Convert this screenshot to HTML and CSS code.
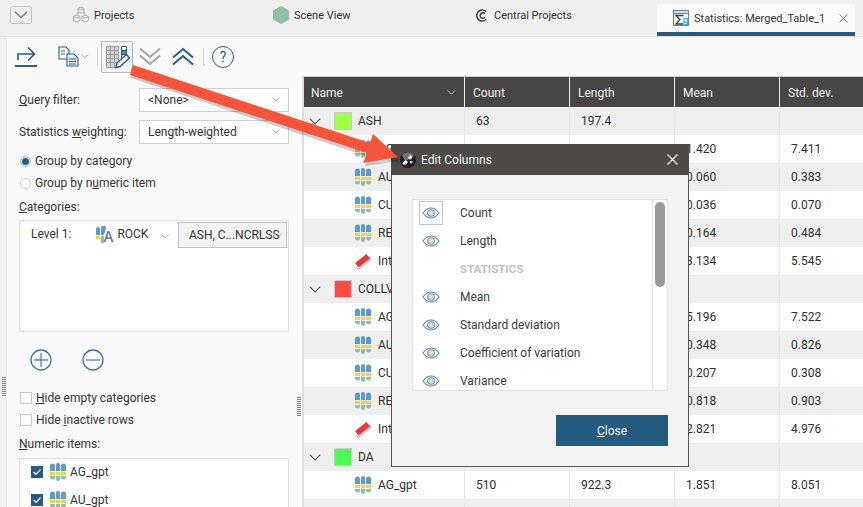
FILE: index.html
```html
<!DOCTYPE html>
<html lang="en">
<head>
<meta charset="utf-8">
<title>Statistics: Merged_Table_1</title>
<link rel="stylesheet" href="styles.css">
</head>
<body>
<svg class="defs" width="0" height="0">
  <symbol id="num" viewBox="0 0 18 18">
    <path fill="#5b9ac9" d="M1 8V3a2.500 2.500 0 0 1 5 0v5zM7 8V2a2 2 0 0 1 4 0v6zM12 8V3a2.500 2.500 0 0 1 5 0v5z"/>
    <path fill="#f6cf45" d="M1 9h5v3H1zM7 9h4v3H7zM12 9h5v3h-5z"/>
    <path fill="#8dbfa5" d="M1 13h5v1a2.500 2.500 0 0 1-5 0zM7 13h4v3a2 2 0 0 1-4 0zM12 13h5v1a2.500 2.500 0 0 1-5 0z"/>
  </symbol>
  <symbol id="interval" viewBox="0 0 18 18">
    <path fill="none" stroke="#b5b5b5" stroke-width="1.100" d="M2 15l2.500 2.500 12.500-10.500-2-2.500"/>
    <path fill="#e5383b" d="M1 11L12.500 2l3.500 4.500L4.500 15.500z"/>
  </symbol>
  <symbol id="eye" viewBox="0 0 18 12">
    <path fill="none" stroke="#5f86a3" stroke-width="1.100" d="M1 6c2.500-3.400 5-5 8-5s5.500 1.600 8 5c-2.500 3.400-5 5-8 5S3.500 9.400 1 6z"/>
    <circle cx="9" cy="6" r="3.300" fill="none" stroke="#5f86a3" stroke-width="1.100"/>
    <circle cx="9" cy="6" r="1.500" fill="none" stroke="#9db5c6" stroke-width="0.800"/>
  </symbol>
  <symbol id="chev" viewBox="0 0 10 6">
    <path fill="none" stroke="currentColor" stroke-width="1" d="M.5.500L5 5 9.500.500"/>
  </symbol>
</svg>

<div class="app">
  <header class="tabbar">
    <button class="collapse"><svg class="collapse-icon"><use href="#chev"/></svg></button>
    <div class="tab tab-projects">
      <svg class="tab-icon" viewBox="0 0 18 18"><path fill="none" stroke="#a9a9a9" stroke-width="1" d="M9 1l3 1.500v3L9 7 6 5.500v-3zM5 9l3 1.500v4L5 16l-3.500-1.500v-4zM13 9l3.500 1.500v4L13 16l-3-1.500v-4zM6 2.500l3 1.500 3-1.500M1.500 10.500L5 12l3-1.500M10 10.500l3 1.500 3.500-1.500M6 5.500L4.500 9M12 5.500L13.500 9"/></svg>
      <span>Projects</span>
    </div>
    <div class="tab tab-scene">
      <svg class="tab-icon" viewBox="0 0 18 18"><path fill="#8dbfa5" d="M9 0l8 4.500v9L9 18l-8-4.500v-9z"/><path fill="none" stroke="#a5ceb8" stroke-width=".7" d="M1 4.500L9 9l8-4.500M9 9v9"/></svg>
      <span>Scene View</span>
    </div>
    <div class="tab tab-central">
      <svg class="central-icon" viewBox="0 0 14 14"><path fill="none" stroke="#333" stroke-width="1.500" d="M12 2.600A6 6 0 1 0 12 11.400"/><path fill="none" stroke="#333" stroke-width="1.500" d="M10.800 5A3 3 0 1 0 10.800 9"/></svg>
      <span>Central Projects</span>
    </div>
    <div class="tab tab-active">
      <svg class="stat-icon" viewBox="0 0 16 16"><path fill="#f2f6f8" stroke="#5f86a3" d="M.5.500h15v15H.5z"/><path fill="#cfe0ea" stroke="#5f86a3" d="M.5.500h15v3H.5z"/><path fill="none" stroke="#3d3d3d" stroke-width="1.300" d="M10.500 5.500H3l4 4-4 4.500h7.500"/><path fill="none" stroke="#4fa6d3" stroke-width="1.200" d="M11 8.500h3.500v4H11zM14.500 8.500v6H11"/></svg>
      <span class="tab-title">Statistics: Merged_Table_1</span>
      <svg class="tab-close" viewBox="0 0 9 9"><path fill="none" stroke="#7a7a7a" d="M.5.500l8 8M8.500.500l-8 8"/></svg>
    </div>
  </header>

  <div class="workspace">
    <div class="strip"></div>
    <aside class="panel">
      <div class="toolbar">
        <svg class="tool tool-export" viewBox="0 0 22 21"><path fill="none" stroke="#2a5f84" stroke-width="1.700" d="M3 14V8h16M13 1.500L19.500 8 13 14.500"/><path stroke="#2a5f84" stroke-width="2" d="M0 20h22"/></svg>
        <svg class="tool tool-copy" viewBox="0 0 21 21"><path fill="#fff" stroke="#2a5f84" stroke-width="1.100" d="M1 1h7l3 3v9H1z"/><path fill="#eaf1f6" stroke="#2a5f84" stroke-width="1.100" d="M9 8h7l4 4v8H9z"/><path fill="none" stroke="#2a5f84" d="M11 13h7M11 15.500h7M11 18h7M3 5h4M3 8h4"/></svg>
        <svg class="tool-chev"><use href="#chev"/></svg>
        <span class="sep sep-a"></span>
        <span class="tool-pressed">
          <svg class="tool-grid" viewBox="0 0 26 24">
            <path fill="#d4d4d4" stroke="#9a9a9a" d="M2.500 1.500h12v21h-12z"/>
            <path fill="none" stroke="#9a9a9a" d="M6.500 1.500v21M10.500 1.500v21M2.500 5.500h12M2.500 9.500h12M2.500 13.500h12M2.500 17.500h12"/>
            <path fill="#fff" stroke="#2a5f84" d="M17.500 1.500h5v13h-5z"/>
            <path fill="#5a87a6" d="M18 6h4v3h-4z"/>
            <path stroke="#2a5f84" d="M17.500 5.500h5M17.500 9.500h5"/>
            <path fill="#fafafa" stroke="#2a5f84" stroke-width="1.400" d="M12 22.500l1-4.500 9.500-8.500 3 3.500-9.500 8.500z"/>
          </svg>
        </span>
        <svg class="tool tool-dbl" viewBox="0 0 22 19"><path fill="none" stroke="#a3a3a3" stroke-width="2" d="M1 1.500l10 8.500 10-8.500M1 8.500L11 17l10-8.500"/></svg>
        <svg class="tool tool-dbl" viewBox="0 0 22 19"><path fill="none" stroke="#2a5f84" stroke-width="2" d="M1 10.500L11 2l10 8.500M1 17.500L11 9l10 8.500"/></svg>
        <span class="sep sep-b"></span>
        <span class="help">?</span>
      </div>

      <div class="form-row">
        <label class="form-label"><u>Q</u>uery filter:</label>
        <div class="select"><span>&lt;None&gt;</span><svg class="select-chev"><use href="#chev"/></svg></div>
      </div>
      <div class="form-row row-second">
        <label class="form-label">Statistics <u>w</u>eighting:</label>
        <div class="select"><span>Length-weighted</span><svg class="select-chev"><use href="#chev"/></svg></div>
      </div>

      <div class="radio-row radio-first"><span class="radio radio-on"></span><span>Group by cate<u>g</u>ory</span></div>
      <div class="radio-row"><span class="radio"></span><span>Group by n<u>u</u>meric item</span></div>

      <div class="caption caption-cat"><u>C</u>ategories:</div>
      <div class="cat-box">
        <span class="level">Level 1:</span>
        <svg class="rock-icon" viewBox="0 0 18 18">
          <path fill="#5b9ac9" d="M0 9V3a2 2 0 0 1 4 0v6zM5 9V2a2.500 2.500 0 0 1 5 0L8 9z"/>
          <path fill="#f6cf45" d="M0 10h4v3H0z"/>
          <path fill="#8dbfa5" d="M5 10h3v6a1.500 1.500 0 0 1-3 0z"/>
          <path fill="#7d7d7d" d="M11.500 5h2l4 11h-2l-1-3h-4l-1 3h-2zM11.300 11.300h2.700l-1.300-4z"/>
        </svg>
        <span class="rock">ROCK</span>
        <svg class="rock-chev"><use href="#chev"/></svg>
        <div class="cat-select"><span>ASH, C...NCRLSS</span><svg class="cat-chev"><use href="#chev"/></svg></div>
      </div>

      <div class="addrem">
        <svg class="round" viewBox="0 0 22 22"><circle cx="11" cy="11" r="10" fill="none" stroke="#3f7196" stroke-width="1.300"/><path stroke="#5f86a3" stroke-width="1.300" d="M4 11h14M11 4v14"/></svg>
        <svg class="round" viewBox="0 0 22 22"><circle cx="11" cy="11" r="10" fill="none" stroke="#3f7196" stroke-width="1.300"/><path stroke="#5f86a3" stroke-width="1.300" d="M4 11h14"/></svg>
      </div>

      <div class="check-row check-first"><span class="check"></span><span><u>H</u>ide empty categories</span></div>
      <div class="check-row"><span class="check"></span><span>Hide <u>i</u>nactive rows</span></div>

      <div class="caption caption-num"><u>N</u>umeric items:</div>
      <div class="num-box">
        <div class="num-row"><span class="check check-on"><svg class="tick" viewBox="0 0 8 6"><path fill="none" stroke="#fff" stroke-width="1.200" d="M.5 3l2.500 2.300L7.500.500"/></svg></span><svg class="num-icon"><use href="#num"/></svg><span>AG_gpt</span></div>
        <div class="num-row"><span class="check check-on"><svg class="tick" viewBox="0 0 8 6"><path fill="none" stroke="#fff" stroke-width="1.200" d="M.5 3l2.500 2.300L7.500.500"/></svg></span><svg class="num-icon"><use href="#num"/></svg><span>AU_gpt</span></div>
      </div>
      <span class="grip grip-right"></span>
    </aside>

    <main class="main">
      <table class="stats">
        <colgroup><col class="c-name"><col class="c-n"><col class="c-n"><col class="c-n"><col class="c-last"></colgroup>
        <thead>
          <tr><th><span class="th-name">Name<svg class="th-chev"><use href="#chev"/></svg></span></th><th>Count</th><th>Length</th><th>Mean</th><th>Std. dev.</th></tr>
        </thead>
        <tbody>
          <tr class="group"><td><span class="g-name"><svg class="g-chev"><use href="#chev"/></svg><span class="swatch swatch-ash"></span>ASH</span></td><td>63</td><td>197.4</td><td></td><td></td></tr>
          <tr><td><span class="c-item"><svg class="item-icon"><use href="#num"/></svg>AG_gpt</span></td><td></td><td></td><td>1.420</td><td>7.411</td></tr>
          <tr class="alt"><td><span class="c-item"><svg class="item-icon"><use href="#num"/></svg>AU_gpt</span></td><td></td><td></td><td>0.060</td><td>0.383</td></tr>
          <tr><td><span class="c-item"><svg class="item-icon"><use href="#num"/></svg>CU_gpt</span></td><td></td><td></td><td>0.036</td><td>0.070</td></tr>
          <tr class="alt"><td><span class="c-item"><svg class="item-icon"><use href="#num"/></svg>RE_gpt</span></td><td></td><td></td><td>0.164</td><td>0.484</td></tr>
          <tr><td><span class="c-item"><svg class="item-icon"><use href="#interval"/></svg>Interval</span></td><td></td><td></td><td>3.134</td><td>5.545</td></tr>
          <tr class="group"><td><span class="g-name"><svg class="g-chev"><use href="#chev"/></svg><span class="swatch swatch-coll"></span>COLLV</span></td><td></td><td></td><td></td><td></td></tr>
          <tr><td><span class="c-item"><svg class="item-icon"><use href="#num"/></svg>AG_gpt</span></td><td></td><td></td><td>5.196</td><td>7.522</td></tr>
          <tr class="alt"><td><span class="c-item"><svg class="item-icon"><use href="#num"/></svg>AU_gpt</span></td><td></td><td></td><td>0.348</td><td>0.826</td></tr>
          <tr><td><span class="c-item"><svg class="item-icon"><use href="#num"/></svg>CU_gpt</span></td><td></td><td></td><td>0.207</td><td>0.308</td></tr>
          <tr class="alt"><td><span class="c-item"><svg class="item-icon"><use href="#num"/></svg>RE_gpt</span></td><td></td><td></td><td>0.818</td><td>0.903</td></tr>
          <tr><td><span class="c-item"><svg class="item-icon"><use href="#interval"/></svg>Interval</span></td><td></td><td></td><td>2.821</td><td>4.976</td></tr>
          <tr class="group"><td><span class="g-name"><svg class="g-chev"><use href="#chev"/></svg><span class="swatch swatch-da"></span>DA</span></td><td></td><td></td><td></td><td></td></tr>
          <tr><td><span class="c-item"><svg class="item-icon"><use href="#num"/></svg>AG_gpt</span></td><td>510</td><td>922.3</td><td>1.851</td><td>8.051</td></tr>
          <tr class="alt"><td></td><td></td><td></td><td></td><td></td></tr>
        </tbody>
      </table>
    </main>
  </div>
</div>
<span class="grip grip-left"></span>

<section class="dialog">
  <div class="dlg-title">
    <svg class="dlg-logo" viewBox="0 0 16 16"><circle cx="8" cy="8" r="8" fill="#1f1f1f"/><path fill="#9a9a9a" d="M2 3a8 8 0 0 1 12 0l-3 4-6 2z" opacity=".7"/><path fill="#fff" d="M2.500 11l3-3 2.500 2-2 2.500H3zM8 6l2-3 2.500 1.500-1.500 3zM9.500 9l3.500.5-2 2.500z"/></svg>
    <span class="dlg-name">Edit Columns</span>
    <svg class="dlg-close" viewBox="0 0 11 11"><path fill="none" stroke="#fff" stroke-width="1.100" d="M.5.500l10 10M10.500.500l-10 10"/></svg>
  </div>
  <div class="dlg-body">
    <div class="list">
      <div class="list-items">
        <div class="li"><span class="eye-wrap eye-focus"><svg class="eye"><use href="#eye"/></svg></span><span>Count</span></div>
        <div class="li"><span class="eye-wrap"><svg class="eye"><use href="#eye"/></svg></span><span>Length</span></div>
        <div class="li li-head"><span class="eye-wrap"></span><span>STATISTICS</span></div>
        <div class="li"><span class="eye-wrap"><svg class="eye"><use href="#eye"/></svg></span><span>Mean</span></div>
        <div class="li"><span class="eye-wrap"><svg class="eye"><use href="#eye"/></svg></span><span>Standard deviation</span></div>
        <div class="li"><span class="eye-wrap"><svg class="eye"><use href="#eye"/></svg></span><span>Coefficient of variation</span></div>
        <div class="li"><span class="eye-wrap"><svg class="eye"><use href="#eye"/></svg></span><span>Variance</span></div>
      </div>
      <div class="scroll"><span class="thumb"></span></div>
    </div>
    <div class="dlg-foot"><button class="close-btn"><u>C</u>lose</button></div>
  </div>
</section>

<svg class="arrow" viewBox="0 0 863 507">
  <path fill="#000" opacity=".2" d="M131 68L131 78 369 157 365 166 399 161 375 138 372 146z"/>
  <path fill="#f5553a" d="M133 65L130 75 367 153 363 163 398 157 373 134 370 143z"/>
</svg>
</body>
</html>
```

FILE: styles.css
```css
* { box-sizing: border-box; }
html, body { margin: 0; padding: 0; width: 863px; height: 507px; overflow: hidden; }
body { font-family: Roboto, "Liberation Sans", sans-serif; font-size: 12px; color: #333; background: #f0f0f0; position: relative; }
svg { display: block; flex: none; }
u { text-underline-offset: 1px; }
.defs { position: absolute; }
.app { display: flex; flex-direction: column; height: 507px; }

/* tabs */
.tabbar { display: flex; align-items: flex-start; height: 37px; flex: none; background: #f0f0f0; border-bottom: 1px solid #e2e2e2; position: relative; }
.collapse { width: 22px; height: 18px; margin: 6px 0 0 10px; padding: 0; background: #f0f0f0; border: 1px solid #c6c6c6; border-radius: 2px; display: flex; align-items: center; justify-content: center; color: #777; }
.collapse-icon { width: 14px; height: 8px; }
.tab { display: flex; align-items: center; height: 30px; font-size: 11px; }
.tab-icon { width: 18px; height: 18px; margin-right: 4px; }
.tab-projects { margin-left: 40px; width: 62px; }
.tab-scene { margin-left: 138px; width: 120px; }
.tab-central { margin-left: 83px; width: 182px; }
.central-icon { width: 13px; height: 13px; margin-right: 6px; }
.tab-active { width: 198px; height: 32px; margin-top: 4px; background: #fbfbfb; border-bottom: 4px solid #265a7e; padding: 0 0 0 16px; }
.stat-icon { width: 16px; height: 16px; margin-right: 5px; }
.tab-title { width: 145px; white-space: nowrap; }
.tab-close { width: 9px; height: 9px; }

/* workspace */
.workspace { display: flex; flex: 1; min-height: 0; }
.strip { width: 7px; flex: none; background: #f0f0f0; border-right: 1px solid #e8e8e8; }
.panel { width: 295px; flex: none; background: #fafafa; position: relative; padding: 0 0 0 12px; overflow: hidden; }
.toolbar { display: flex; align-items: center; height: 39px; position: relative; }
.tool-export { width: 22px; height: 21px; margin-left: -4px; }
.tool-copy { width: 21px; height: 21px; margin-left: 21px; }
.tool-chev { width: 8px; height: 5px; margin-left: 2px; color: #a0a0a0; }
.sep { width: 1px; height: 18px; background: #d8d8d8; }
.sep-a { margin-left: 8px; }
.tool-pressed { width: 32px; height: 32px; margin-left: 3px; background: #f3f3f3; border: 1px solid #b9b9b9; border-radius: 2px; display: flex; align-items: center; justify-content: center; }
.tool-grid { width: 26px; height: 24px; }
.tool-dbl { width: 22px; height: 19px; }
.tool-pressed + .tool-dbl { margin-left: 6px; }
.tool-dbl + .tool-dbl { margin-left: 11px; }
.sep-b { margin-left: 9px; }
.help { width: 22px; height: 22px; margin-left: 8px; border: 1.500px solid #2a5f84; border-radius: 50%; color: #2a5f84; font-size: 14px; display: flex; align-items: center; justify-content: center; }

.form-row { display: flex; align-items: center; height: 24px; margin-top: 12px; }
.row-second { margin-top: 8px; }
.form-label { width: 120px; flex: none; }
.select { width: 150px; height: 24px; border: 1px solid #d0d0d0; background: #fff; display: flex; align-items: center; justify-content: space-between; padding: 0 8px 0 8px; margin-top: -1px; }
.select-chev { width: 8px; height: 5px; color: #9a9a9a; }
.radio-row { display: flex; align-items: center; gap: 4px; height: 16px; margin-top: 6px; padding-left: 1px; }
.radio-first { margin-top: 9px; }
.radio { width: 11px; height: 11px; border-radius: 50%; border: 1px solid #cfcfcf; background: #fff; position: relative; flex: none; }
.radio-on { border-color: #bcd0dd; background: #265a7e; box-shadow: inset 0 0 0 1px #fff; }
.caption-cat { margin-top: 8px; height: 16px; line-height: 16px; }
.cat-box { width: 270px; height: 112px; margin-top: 5px; background: #fff; border: 1px solid #e0e0e0; display: flex; align-items: flex-start; padding: 1px 1px 0 11px; }
.level { width: 65px; height: 24px; line-height: 24px; }
.rock-icon { width: 18px; height: 18px; margin-top: 4px; margin-left: 1px; }
.rock { margin-left: 3px; height: 24px; line-height: 24px; width: 44px; }
.rock-chev { width: 8px; height: 5px; margin-top: 12px; color: #a5a5a5; }
.cat-select { width: 110px; height: 26px; margin-left: 9px; background: #f3f3f3; border: 1px solid #c4c4c4; display: flex; align-items: center; padding-left: 10px; position: relative; white-space: nowrap; }
.cat-chev { width: 8px; height: 5px; position: absolute; right: 4px; top: 10px; color: #999; }
.addrem { display: flex; gap: 30px; margin: 17px 0 0 11px; }
.round { width: 22px; height: 22px; }
.check-row { display: flex; align-items: center; gap: 4px; height: 16px; margin-top: 6px; padding-left: 1px; }
.check-first { margin-top: 19px; }
.check { width: 12px; height: 12px; border: 1px solid #c9c9c9; background: #fff; flex: none; display: flex; align-items: center; justify-content: center; }
.check-on { background: #265a7e; border-color: #265a7e; }
.tick { width: 8px; height: 6px; }
.caption-num { margin-top: 8px; height: 16px; line-height: 16px; }
.num-box { width: 270px; height: 60px; margin-top: 6px; background: #fff; border: 1px solid #e0e0e0; padding: 0 0 0 11px; }
.num-row { display: flex; align-items: center; height: 28px; }
.num-row:first-child { margin-top: -1px; }
.num-icon { width: 18px; height: 18px; margin: 0 3px 0 6px; }
.grip { width: 4px; height: 20px; position: absolute; background: repeating-linear-gradient(0deg, #8c8c8c 0 1px, #e4e4e4 1px 2px); }
.grip-right { left: 290px; top: 359px; }
.grip-left { left: 2px; top: 376px; }

/* table */
.main { flex: 1; min-width: 0; padding-top: 39px; background: #fafafa; overflow: hidden; }
.stats { width: 561px; table-layout: fixed; border-collapse: separate; border-spacing: 0; border-left: 2px solid #dcdcdc; border-top: 1px solid #d0d0d0; background: #fff; }
.c-name { width: 161px; }
.c-n { width: 105px; }
.c-last { width: 85px; }
th { height: 30px; padding: 1px 0 0 8px; background: #474545; color: #f2f2f2; font-weight: 400; text-align: left; border-right: 1px solid #eee; white-space: nowrap; }
th:first-child { padding-left: 7px; }
.th-name { display: flex; align-items: center; justify-content: space-between; padding-right: 8px; }
.th-chev { width: 9px; height: 5px; color: #e8e8e8; }
td { height: 28px; padding: 0 0 0 11px; border-right: 1px solid #e6e6e6; white-space: nowrap; overflow: hidden; color: #2e2e2e; }
td:first-child { padding-left: 0; }
.group td, .alt td { background: #efefef; }
.g-name { display: flex; align-items: center; }
.g-chev { width: 12px; height: 7px; margin: 0 13px 0 5px; color: #555; }
.swatch { width: 18px; height: 18px; margin-right: 6px; border: 1px solid #c9c9c9; }
.swatch-ash { background: #a2ff47; }
.swatch-coll { background: #ff4a4a; }
.swatch-da { background: #4dff4d; }
.c-item { display: flex; align-items: center; padding-left: 50px; }
.item-icon { width: 18px; height: 18px; margin-right: 6px; }

/* dialog */
.dialog { position: absolute; left: 391px; top: 144px; width: 298px; height: 323px; background: #f3f3f3; border: 1px solid #555; border-top: 0; display: flex; flex-direction: column; }
.dlg-title { height: 31px; flex: none; margin: 0 -1px; background: #4d4a47; display: flex; align-items: center; padding: 0 11px 0 9px; color: #f4f4f4; }
.dlg-logo { width: 16px; height: 16px; }
.dlg-name { margin-left: 5px; flex: 1; }
.dlg-close { width: 11px; height: 11px; }
.dlg-body { flex: 1; padding: 24px 20px 0 20px; }
.list { width: 256px; height: 192px; background: #fff; border: 1px solid #e2e2e2; display: flex; overflow: hidden; }
.list-items { width: 239px; flex: none; overflow: hidden; }
.li { display: flex; align-items: center; height: 28px; color: #3a3a3a; }
.li:first-child { margin-top: -1px; }
.li-head { color: #c2c2c2; font-weight: 700; font-size: 11.500px; }
.eye-wrap { width: 24px; height: 24px; margin: 0 17px 0 6px; display: flex; align-items: center; justify-content: center; flex: none; border: 1px solid transparent; }
.eye-focus { border-color: #b8c8d3; }
.eye { width: 18px; height: 12px; }
.scroll { flex: 1; border-left: 1px solid #e2e2e2; padding: 2px 2px 0 2px; }
.thumb { display: block; width: 10px; height: 85px; background: #9a9a9a; border-radius: 5px; }
.dlg-foot { display: flex; justify-content: flex-end; margin-top: 24px; }
.close-btn { width: 112px; height: 31px; background: #265a7e; border: 0; color: #eef3f6; font: inherit; padding: 0; }

.arrow { position: absolute; left: 0; top: 0; width: 863px; height: 507px; pointer-events: none; }
```
